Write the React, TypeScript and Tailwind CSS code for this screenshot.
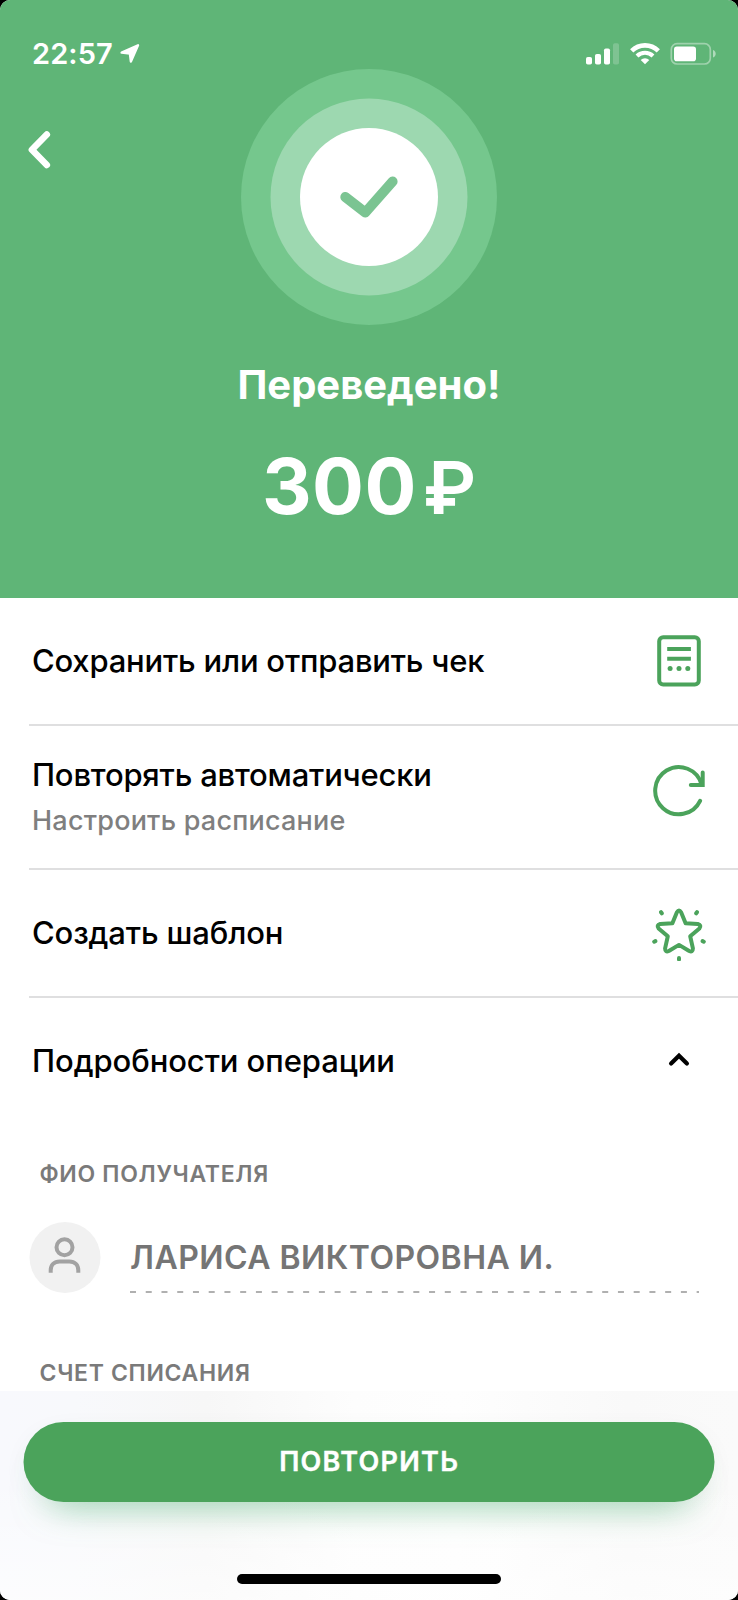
import React from "react";

function StatusBar() {
  return (
    <div className="flex h-[69px] items-start justify-between pl-8 pr-[22px] pt-[39px] text-white">
      <div className="flex h-[30px] items-center">
        <span className="text-[29px] font-semibold leading-[30px] tracking-[0.1px]">22:57</span>
        <svg className="ml-[6.5px] h-[22px] w-[22px]" viewBox="0 0 22 22" fill="currentColor">
          <path
            d="M2.6 9.6 19 2.3 11.9 18.6 10.9 10.6Z"
            stroke="currentColor"
            strokeWidth="2.4"
            strokeLinejoin="round"
          />
        </svg>
      </div>
      <div className="flex h-[30px] items-center">
        <svg className="h-[22px] w-[34px]" viewBox="0 0 34 22" fill="currentColor">
          <rect x="0" y="14" width="6" height="7.5" rx="1.8" />
          <rect x="9" y="11" width="6" height="10.5" rx="1.8" />
          <rect x="18" y="5.5" width="6" height="16" rx="1.8" />
          <rect x="27" y="0.2" width="6" height="21.3" rx="1.8" opacity="0.2" />
        </svg>
        <svg className="ml-[10px] h-[22px] w-[30px]" viewBox="0 0 30 22" fill="none" stroke="currentColor">
          <path d="M1.7 7.8a19 19 0 0 1 26.6 0" strokeWidth="4.6" />
          <path d="M7 13a11.6 11.6 0 0 1 16 0" strokeWidth="4.1" />
          <path d="M15 21.3 10.7 17.1a6.2 6.2 0 0 1 8.6 0Z" fill="currentColor" stroke="none" />
        </svg>
        <svg className="ml-[10px] h-[24px] w-[46px]" viewBox="0 0 46 24" fill="none">
          <rect x="1.3" y="1.6" width="39" height="20.4" rx="5.8" stroke="white" strokeOpacity="0.4" strokeWidth="1.7" />
          <rect x="4" y="4.6" width="22" height="14.6" rx="2.8" fill="white" />
          <path d="M43 8c1.7.6 2.7 2 2.7 3.8s-1 3.2-2.7 3.8Z" fill="white" fillOpacity="0.5" />
        </svg>
      </div>
    </div>
  );
}

function SuccessBadge() {
  return (
    <svg className="h-64 w-64" viewBox="0 0 256 256" fill="none">
      <circle cx="128" cy="128" r="128" fill="#75c78d" />
      <circle cx="128" cy="128" r="98.5" fill="#9dd8b0" />
      <circle cx="128" cy="128" r="69" fill="#ffffff" />
      <path
        d="M104.3 128 124.3 143.5 151.6 112.5"
        stroke="#7bc492"
        strokeWidth="10"
        strokeLinecap="round"
        strokeLinejoin="round"
      />
    </svg>
  );
}

function ReceiptIcon() {
  return (
    <svg className="h-14 w-14" viewBox="0 0 56 56" fill="none" stroke="#4ba35b" strokeWidth="4">
      <rect x="8.2" y="4.2" width="39.6" height="47.4" rx="4" />
      <path d="M16.2 15.9h23.7M16.2 25.7h23.7" />
      <g fill="#4ba35b" stroke="none">
        <circle cx="19.1" cy="35.5" r="2.5" />
        <circle cx="28" cy="35.5" r="2.5" />
        <circle cx="36.8" cy="35.5" r="2.5" />
      </g>
    </svg>
  );
}

function RepeatIcon() {
  return (
    <svg
      className="mb-[11px] h-14 w-14"
      viewBox="0 0 56 56"
      fill="none"
      stroke="#4ba35b"
      strokeWidth="4"
      strokeLinecap="round"
    >
      <path d="M49.1 36.8A23.6 23.6 0 1 1 50.6 20.6" />
      <path d="M51.7 8.6v12.3H39.8" />
    </svg>
  );
}

function TemplateIcon() {
  return (
    <svg
      className="h-14 w-14"
      viewBox="0 0 56 56"
      fill="none"
      stroke="#4ba35b"
      strokeWidth="4"
      strokeLinecap="round"
      strokeLinejoin="round"
    >
      <path d="M25.9 7.2Q28 3.8 30.1 7.2L34.6 18.2 46.8 19Q50.9 20.2 48.4 23.4L39.2 31.3 41.9 43.4Q41.8 47.6 38.2 46L28 39.9 17.8 46Q14.2 47.6 14.1 43.4L16.8 31.3 7.6 23.4Q5.1 20.2 9.2 19L21.4 18.2Z" />
      <path d="M10 7.2l.8 1.1M46 7.2l-.8 1.1M3.2 36.7l1.2-.6M52.8 36.7l-1.2-.6M28 53v1.4" />
    </svg>
  );
}

function ChevronUp() {
  return (
    <svg
      className="h-14 w-14"
      viewBox="0 0 56 56"
      fill="none"
      stroke="#000000"
      strokeWidth="4.2"
      strokeLinecap="round"
    >
      <path d="M20.1 30.6 28 22.8 35.9 30.6" />
    </svg>
  );
}

type RowProps = {
  title: string;
  spacing: string;
  subtitle?: string;
  icon: React.ReactNode;
  last?: boolean;
};

function ActionRow({ title, spacing, subtitle, icon, last }: RowProps) {
  return (
    <div className={last ? "ml-[29px]" : "ml-[29px] border-b-2 border-[#dfdfe0]"}>
      <div
        className={
          subtitle
            ? "flex h-[142px] items-center justify-between pl-[3px] pr-[31px]"
            : "flex h-[126px] items-center justify-between pl-[3px] pr-[31px]"
        }
      >
        <div className={subtitle ? "flex flex-col gap-[6px] pt-[2px]" : "flex flex-col pb-[1px]"}>
          <span className={`text-[31px] font-medium leading-10 text-black ${spacing}`}>{title}</span>
          {subtitle && (
            <span className="text-[27px] font-medium leading-10 tracking-[0.22px] text-[#7f7f7f]">{subtitle}</span>
          )}
        </div>
        {icon}
      </div>
    </div>
  );
}

function FieldLabel({ children }: { children: React.ReactNode }) {
  return (
    <div className="pl-[39.5px] text-[23px] font-semibold leading-8 tracking-[0.68px] text-[#7a7a7a]">{children}</div>
  );
}

function Recipient() {
  return (
    <div className="mt-[32px] flex h-[71px] pl-[29.5px]">
      <div className="flex h-[71px] w-[71px] -translate-x-[0.5px] items-center justify-center rounded-full bg-[#f1f1f1]">
        <svg className="h-10 w-10" viewBox="0 0 40 40" fill="none" stroke="#a2a2a2" strokeWidth="4">
          <circle cx="20" cy="10.2" r="8" />
          <path d="M6.2 35.8v-2.6c0-5 3.4-8.6 9-8.6h9.6c5.6 0 9 3.6 9 8.6v2.6" />
        </svg>
      </div>
      <div className="ml-[29.5px] flex w-[569px] flex-col justify-between">
        <span className="pt-[12px] text-[32px] font-semibold leading-[48px] tracking-[0.46px] text-[#757575]">
          ЛАРИСА ВИКТОРОВНА И.
        </span>
        <svg className="h-0.5 w-[569px]" viewBox="0 0 569 2">
          <path d="M0 1h569" stroke="#b0b0b0" strokeWidth="2" strokeDasharray="6 9.74" />
        </svg>
      </div>
    </div>
  );
}

export default function App() {
  return (
    <div className="h-[1600px] w-[738px] overflow-hidden bg-black font-['Inter','Liberation_Sans',sans-serif]">
      <div className="flex h-full flex-col overflow-hidden rounded-[10px] bg-white">
        <header className="h-[598px] shrink-0 bg-[#5fb577] text-white">
          <StatusBar />
          <div className="grid grid-cols-[1fr_256px_1fr]">
            <button className="h-[160px] w-20 pl-6" aria-label="Назад">
              <svg className="h-10 w-7" viewBox="0 0 28 40" fill="none" stroke="currentColor" strokeWidth="6.6" strokeLinecap="round">
                <path d="M22.8 5.5 7.9 20.7 22.8 36" strokeLinejoin="round" />
              </svg>
            </button>
            <SuccessBadge />
          </div>
          <h1 className="mt-9 text-center text-[40px] font-bold leading-[48px]">Переведено!</h1>
          <div className="mt-[37px] flex items-baseline justify-center leading-[80px]">
            <span className="text-[77px] font-bold tracking-[0.5px]">300</span>
            <span className="ml-[6px] text-[73px] font-semibold leading-[76px]">₽</span>
          </div>
        </header>

        <main className="h-[793px] shrink-0 overflow-hidden">
          <ActionRow title="Сохранить или отправить чек" spacing="tracking-[-0.21px]" icon={<ReceiptIcon />} />
          <ActionRow
            title="Повторять автоматически"
            spacing="tracking-[-0.21px]"
            subtitle="Настроить расписание"
            icon={<RepeatIcon />}
          />
          <ActionRow title="Создать шаблон" spacing="tracking-[-0.14px]" icon={<TemplateIcon />} />
          <ActionRow title="Подробности операции" spacing="tracking-[-0.08px]" icon={<ChevronUp />} last />
          <section className="pt-[33.5px]">
            <FieldLabel>ФИО ПОЛУЧАТЕЛЯ</FieldLabel>
            <Recipient />
            <div className="h-16" />
            <FieldLabel>СЧЕТ СПИСАНИЯ</FieldLabel>
          </section>
        </main>

        <footer className="flex h-[209px] shrink-0 flex-col items-center bg-[linear-gradient(90deg,#f8f9fd_0%,#f8f9fc_10%,#f7f7f7_28%,#fdfdfd_48%,#fefefe_62%,#f9f9f9_85%,#fafafa_100%)]">
          <div className="flex h-full w-full flex-col items-center bg-linear-to-b from-white/0 from-40% to-white/60">
            <button className="mt-[31px] h-20 w-[691px] -translate-x-[0.5px] rounded-full bg-[#4ba35b] pb-0.5 pl-[1.4px] text-[27px] font-semibold leading-none tracking-[1.3px] text-white shadow-[0_28px_36px_-26px_rgba(80,185,120,0.6),0_8px_32px_-12px_rgba(40,100,70,0.14)] [-webkit-text-stroke:0.4px_white]">
              ПОВТОРИТЬ
            </button>
            <div className="mt-[72px] h-[10px] w-[264px] rounded-full bg-black" />
          </div>
        </footer>
      </div>
    </div>
  );
}
